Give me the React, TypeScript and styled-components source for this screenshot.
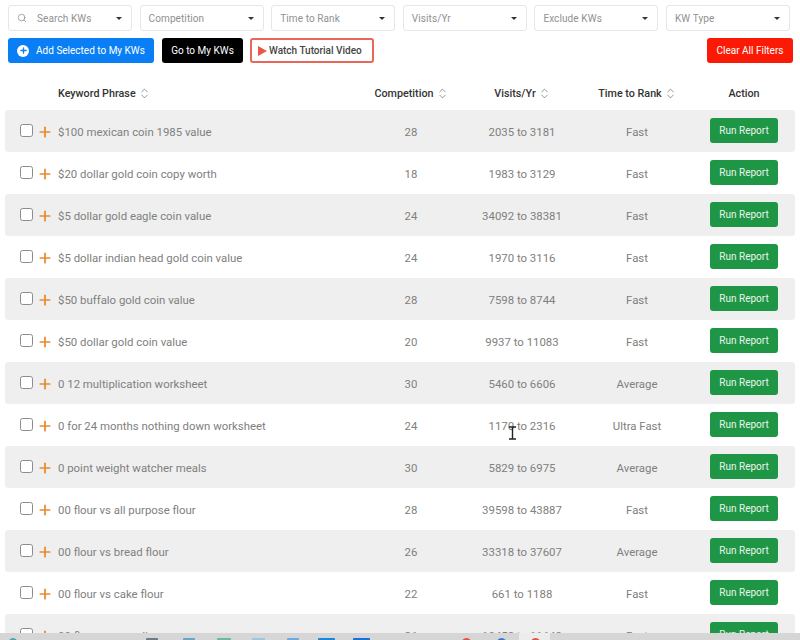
import React from 'react';
import styled, { createGlobalStyle } from 'styled-components';
import { Search, Plus, ChevronUp, ChevronDown } from 'lucide-react';

const GlobalStyle = createGlobalStyle`
	html, body {
		margin: 0;
		padding: 0;
		background: #ffffff;
		font-family: Roboto, 'Liberation Sans', sans-serif;
	}
`;

const FILTERS = ['Search KWs', 'Competition', 'Time to Rank', 'Visits/Yr', 'Exclude KWs', 'KW Type'];

const ROWS = [
	['$100 mexican coin 1985 value', '28', '2035 to 3181', 'Fast'],
	['$20 dollar gold coin copy worth', '18', '1983 to 3129', 'Fast'],
	['$5 dollar gold eagle coin value', '24', '34092 to 38381', 'Fast'],
	['$5 dollar indian head gold coin value', '24', '1970 to 3116', 'Fast'],
	['$50 buffalo gold coin value', '28', '7598 to 8744', 'Fast'],
	['$50 dollar gold coin value', '20', '9937 to 11083', 'Fast'],
	['0 12 multiplication worksheet', '30', '5460 to 6606', 'Average'],
	['0 for 24 months nothing down worksheet', '24', '1170 to 2316', 'Ultra Fast'],
	['0 point weight watcher meals', '30', '5829 to 6975', 'Average'],
	['00 flour vs all purpose flour', '28', '39598 to 43887', 'Fast'],
	['00 flour vs bread flour', '26', '33318 to 37607', 'Average'],
	['00 flour vs cake flour', '22', '661 to 1188', 'Fast'],
	['00 flour vs semolina', '26', '10458 to 11648', 'Fast'],
];

const TASK_ICONS = [
	{ left: 8, width: 10, color: '#4aa3b8', round: true },
	{ left: 146, width: 12, color: '#6f7b85', round: false },
	{ left: 183, width: 12, color: '#6aa6c8', round: false },
	{ left: 217, width: 14, color: '#6fb89a', round: false },
	{ left: 252, width: 13, color: '#9cc6e4', round: false },
	{ left: 287, width: 12, color: '#6fa8e0', round: false },
	{ left: 318, width: 17, color: '#1a88d8', round: false },
	{ left: 353, width: 17, color: '#1a6fd8', round: false },
	{ left: 461, width: 11, color: '#e0533f', round: true },
	{ left: 496, width: 11, color: '#3a78d8', round: true },
	{ left: 530, width: 11, color: '#e0533f', round: true },
];

const Page = styled.div`
	position: relative;
	width: 800px;
	height: 640px;
	display: flex;
	flex-direction: column;
	overflow: hidden;
`;

const Content = styled.div`
	flex: 1;
	min-height: 0;
	overflow: hidden;
	padding: 5px 5px 0;
`;

const FilterBar = styled.div`
	display: flex;
	gap: 7.6px;
	padding: 0 5px 0 3px;
`;

const Filter = styled.div`
	box-sizing: border-box;
	width: 124px;
	height: 26px;
	display: flex;
	align-items: center;
	padding: 0 9px 0 8px;
	background: #fff;
	border: 1px solid #e6e6e6;
	border-radius: 3px;
	color: #909090;
	font-size: 10px;
	letter-spacing: 0.1px;

	span {
		flex: 1;
	}

	svg {
		margin-right: 10px;
		color: #777;
	}
`;

const Caret = styled.i`
	width: 0;
	height: 0;
	border-left: 3px solid transparent;
	border-right: 3px solid transparent;
	border-top: 3.5px solid #333;
`;

const ActionBar = styled.div`
	display: flex;
	align-items: center;
	margin-top: 7px;
	padding: 0 2px 0 3px;
`;

const Button = styled.button<{ $bg: string; $ml: number; $w: number }>`
	box-sizing: border-box;
	width: ${(p) => p.$w}px;
	height: 25px;
	margin-left: ${(p) => p.$ml}px;
	display: flex;
	align-items: center;
	justify-content: center;
	gap: 7px;
	padding: 0;
	border: none;
	border-radius: 3px;
	background: ${(p) => p.$bg};
	color: #fff;
	font-family: inherit;
	font-size: 10px;
`;

const AddIcon = styled.span`
	width: 12px;
	height: 12px;
	border-radius: 50%;
	background: #fff;
	display: flex;
	align-items: center;
	justify-content: center;
	color: #0a7ff5;
`;

const VideoButton = styled.div`
	box-sizing: border-box;
	width: 124px;
	height: 25px;
	margin-left: 7px;
	display: flex;
	align-items: center;
	justify-content: flex-start;
	gap: 2px;
	padding-left: 6px;
	border: 2px solid #e8675a;
	border-radius: 3px;
	color: #444;
	font-size: 10px;
	font-weight: 500;
`;

const PlayTriangle = styled.i`
	width: 0;
	height: 0;
	border-top: 5px solid transparent;
	border-bottom: 5px solid transparent;
	border-left: 9px solid #e8574a;
`;

const Spacer = styled.div`
	flex: 1;
`;

const Grid = styled.div`
	display: grid;
	grid-template-columns: 53px 297px 112px 110px 120px 98px;
	align-items: center;
`;

const HeadRow = styled(Grid)`
	box-sizing: border-box;
	height: 47px;
	padding-top: 13px;
	color: #333;
	font-size: 10.75px;
	font-weight: 500;
`;

const HeadCell = styled.div<{ $left?: boolean; $inset?: number }>`
	grid-column: ${(p) => (p.$left ? '2' : 'auto')};
	display: flex;
	align-items: center;
	justify-content: ${(p) => (p.$left ? 'flex-start' : 'center')};
	gap: 3px;
	padding-right: ${(p) => p.$inset || 0}px;
`;

const Sorter = styled.span`
	display: flex;
	flex-direction: column;
	color: #666;

	svg:first-child {
		margin-bottom: -5px;
	}
`;

const Row = styled(Grid)<{ $shaded: boolean }>`
	height: 42px;
	border-radius: 3px;
	background: ${(p) => (p.$shaded ? '#efefef' : '#ffffff')};
	color: #808080;
	font-size: 11.4px;
`;

const Select = styled.div`
	display: flex;
	align-items: center;
	padding-left: 15px;
	gap: 4px;
	color: #e88a2e;
	transform: translateY(-1px);

	svg {
		transform: translateY(2px);
	}
`;

const CheckBox = styled.span`
	box-sizing: border-box;
	flex: none;
	width: 13px;
	height: 13px;
	border: 1.5px solid #8c8c8c;
	border-radius: 2.5px;
	background: #fff;
`;

const Cell = styled.div`
	text-align: center;
	padding-top: 2px;
`;

const Keyword = styled.div`
	white-space: nowrap;
	padding-top: 2px;
`;

const ReportButton = styled.button`
	justify-self: center;
	width: 68px;
	height: 25px;
	margin: -2px 4px 0 0;
	padding: 1px 0 0;
	border: none;
	border-radius: 3px;
	background: #1f9646;
	color: #e8f5ec;
	font-family: inherit;
	font-size: 10px;
`;

const Taskbar = styled.div`
	position: relative;
	flex: none;
	height: 7px;
	background: #d6d6d6;
	overflow: hidden;
`;

const ActiveTab = styled.i`
	position: absolute;
	top: 0;
	left: 519px;
	width: 31px;
	height: 7px;
	background: #ececec;
`;

const TaskIcon = styled.i<{ $left: number; $width: number; $color: string; $round: boolean }>`
	position: absolute;
	top: 5px;
	left: ${(p) => p.$left}px;
	width: ${(p) => p.$width}px;
	height: 12px;
	border-radius: ${(p) => (p.$round ? '50%' : '1px')};
	background: ${(p) => p.$color};
`;

const TextCursor = styled.svg`
	position: absolute;
	left: 508px;
	top: 426px;
`;

const SortIcon = () => (
	<Sorter>
		<ChevronUp size={11} strokeWidth={1.5} />
		<ChevronDown size={11} strokeWidth={1.5} />
	</Sorter>
);

const App = (): React.FunctionComponentElement<JSX.Element> => {
	return (
		<Page>
			<GlobalStyle />
			<Content>
				<FilterBar>
					{FILTERS.map((name, i) => (
						<Filter key={name}>
							{i === 0 && <Search size={10} strokeWidth={1.5} />}
							<span>{name}</span>
							<Caret />
						</Filter>
					))}
				</FilterBar>
				<ActionBar>
					<Button $bg='#0a7ff5' $ml={0} $w={146}>
						<AddIcon>
							<Plus size={9} strokeWidth={3.5} />
						</AddIcon>
						Add Selected to My KWs
					</Button>
					<Button $bg='#000000' $ml={8} $w={81}>
						Go to My KWs
					</Button>
					<VideoButton>
						<PlayTriangle />
						Watch Tutorial Video
					</VideoButton>
					<Spacer />
					<Button $bg='#fb1a05' $ml={0} $w={86}>
						Clear All Filters
					</Button>
				</ActionBar>
				<HeadRow>
					<HeadCell $left>
						Keyword Phrase <SortIcon />
					</HeadCell>
					<HeadCell>
						Competition <SortIcon />
					</HeadCell>
					<HeadCell>
						Visits/Yr <SortIcon />
					</HeadCell>
					<HeadCell>
						Time to Rank <SortIcon />
					</HeadCell>
					<HeadCell $inset={4}>Action</HeadCell>
				</HeadRow>
				{ROWS.map((row, i) => (
					<Row key={row[0]} $shaded={i % 2 === 0}>
						<Select>
							<CheckBox />
							<Plus size={16} strokeWidth={2.6} />
						</Select>
						<Keyword>{row[0]}</Keyword>
						<Cell>{row[1]}</Cell>
						<Cell>{row[2]}</Cell>
						<Cell>{row[3]}</Cell>
						<ReportButton>Run Report</ReportButton>
					</Row>
				))}
			</Content>
			<Taskbar>
				<ActiveTab />
				{TASK_ICONS.map((icon) => (
					<TaskIcon key={icon.left} $left={icon.left} $width={icon.width} $color={icon.color} $round={icon.round} />
				))}
			</Taskbar>
			<TextCursor width='9' height='14' viewBox='0 0 9 14'>
				<path d='M1 1h7M1 13h7M4.5 1v12' stroke='#222' strokeWidth='1.4' fill='none' />
			</TextCursor>
		</Page>
	);
};

export default App;
